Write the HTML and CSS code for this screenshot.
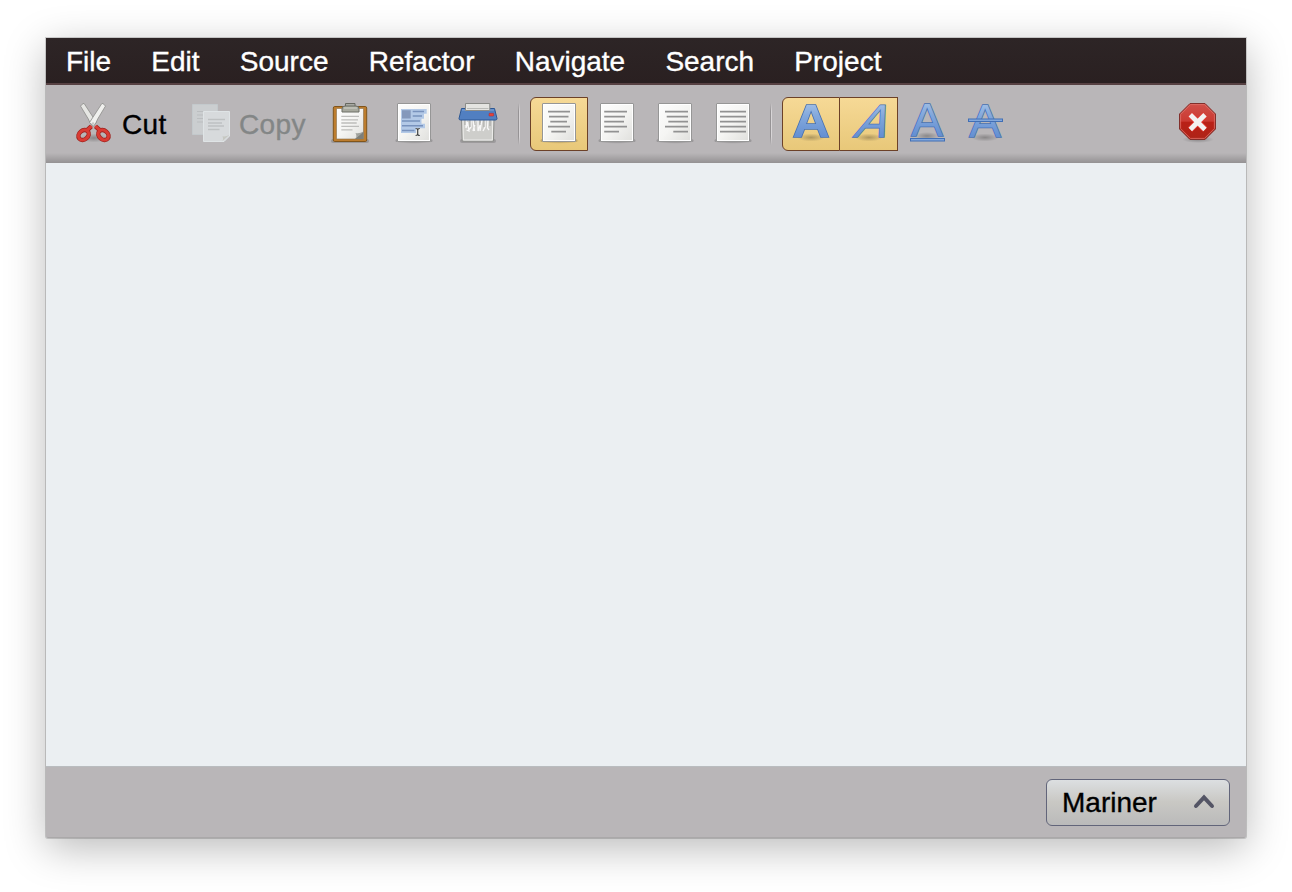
FILE: index.html
```html
<!DOCTYPE html>
<html lang="en">
<head>
<meta charset="utf-8">
<title>Mariner</title>
<link rel="stylesheet" href="styles.css">
</head>
<body>
<svg class="defs" width="0" height="0" aria-hidden="true">
  <defs>
    <linearGradient id="paper" x1="0" y1="0" x2="1" y2="1"><stop offset="0" stop-color="#fdfdfd"/><stop offset=".5" stop-color="#f5f5f3"/><stop offset="1" stop-color="#dfdfdc"/></linearGradient>
    <linearGradient id="blue" x1="0" y1="0" x2="0" y2="1"><stop offset="0" stop-color="#b4cdea"/><stop offset=".4" stop-color="#83a8dc"/><stop offset="1" stop-color="#5583cd"/></linearGradient>
    <linearGradient id="red" x1="0" y1="0" x2="0" y2="1"><stop offset="0" stop-color="#d0504a"/><stop offset=".49" stop-color="#cb3a32"/><stop offset=".52" stop-color="#b92016"/><stop offset="1" stop-color="#ae2418"/></linearGradient>
    <radialGradient id="shade"><stop offset="0" stop-color="#000" stop-opacity=".26"/><stop offset="1" stop-color="#000" stop-opacity="0"/></radialGradient>
    <g id="page">
      <ellipse cx="20" cy="38.3" rx="20" ry="2.5" fill="url(#shade)"/>
      <rect x="1.5" y="36" width="37" height="3" rx="1.5" fill="#000" opacity=".15"/>
      <rect x="3.5" y=".5" width="33" height="38" rx=".5" fill="url(#paper)" stroke="#969696"/>
      <rect x="4.5" y="1.5" width="31" height="36" fill="none" stroke="#fff"/>
    </g>
  </defs>
</svg>
<main class="window">
  <nav class="menubar">
    <span>File</span><span>Edit</span><span>Source</span><span>Refactor</span><span>Navigate</span><span>Search</span><span>Project</span>
  </nav>
  <div class="toolbar">
    <button class="tool cut">
      <svg class="icon" viewBox="0 0 40 40"><ellipse cx="20" cy="35" rx="13" ry="4.5" fill="url(#shade)"/><path d="M6.6 3.2Q7.5 1 10 .3L22.5 19.5 18.3 23.2Q15.3 19 14.3 16Z" fill="#e6e6e3" stroke="#8b8c89" stroke-width=".8"/><path d="M31.4 3.2Q30.5 1 28 .3L15.5 19.5 19.7 23.2Q22.7 19 23.7 16Z" fill="#f0f0ee" stroke="#8b8c89" stroke-width=".8"/><g fill="none"><g stroke="#9e2420" stroke-width="4.5"><ellipse cx="9.6" cy="32" rx="4.4" ry="5.6" transform="rotate(50 9.6 32)"/><ellipse cx="29.4" cy="32" rx="4.4" ry="5.6" transform="rotate(-50 29.4 32)"/><path d="M13.4 27 17.3 23.3M25.6 27 21.5 23.3"/></g><g stroke="#da3b33" stroke-width="3"><ellipse cx="9.6" cy="32" rx="4.4" ry="5.6" transform="rotate(50 9.6 32)"/><ellipse cx="29.4" cy="32" rx="4.4" ry="5.6" transform="rotate(-50 29.4 32)"/><path d="M13.2 27.2 17.6 23M25.8 27.2 21.2 23"/></g></g><circle cx="19" cy="20.5" r="1.2" fill="#c8c8c6"/></svg><span>Cut</span>
    </button>
    <button class="tool copy" disabled>
      <svg class="icon" viewBox="0 0 40 40"><path d="M1.5 1.5H26.5V31.5H1.5Z" fill="#cbced0" stroke="#c3c9cc"/><path d="M6 8.5H21M6 12H20M6 15.5H18M6 19H20" stroke="#bbbec0"/><path d="M12.5 8.5H38.5V33L33 38.5H12.5Z" fill="#d7dadc" stroke="#dfe4e6"/><path d="M17 16.5H34M17 20H31M17 23H33M17 26.5H28.5" stroke="#bec1c2" stroke-width="1.3"/><path d="M30.5 38.7Q33 37 31.5 33.3 35 34 38.5 31.7Z" fill="#c6c8c2"/></svg><span>Copy</span>
    </button>
    <button class="tool"><svg class="icon" viewBox="0 0 40 40"><rect x="1" y="36" width="38" height="4" rx="2" fill="#000" opacity=".17"/><rect x="3.3" y="3.5" width="33.4" height="35" rx="1.5" fill="#bd7d2e" stroke="#80551c"/><path d="M6.5 5.5H33.5V36H6.5Z" fill="url(#paper)" stroke="#8b714b" stroke-width=".6"/><path d="M11.3 13.3H29M11.3 16.8H28M11.3 20H26.7M11.3 23.3H29M11.3 26.8H22.5" stroke="#bdbdbb" stroke-width="1.3"/><path d="M25 36Q27.5 33.5 25.5 30 29.5 31 33.5 28.5Z" fill="#a0a29d"/><path d="M25 36 33.5 28.5V36Z" fill="#7d7f79"/><path d="M15.5 3V.5H25V3" fill="#a8aaa3" stroke="#666860"/><path d="M12 9V6Q12 3 15 3H26Q29 3 29 6V9Z" fill="#a7a99e" stroke="#6d6f67"/><path d="M14 5H27" stroke="#d1d2cb"/></svg></button>
    <button class="tool"><svg class="icon" viewBox="0 0 40 40"><use href="#page"/><path d="M7 6H32.7V10.8H30V15.7H27.5V20.7H31V25.3H22V30H7Z" fill="#b3c9e7"/><rect x="8" y="7.2" width="8.7" height="8.3" fill="#8498bb"/><path d="M18.7 8.5H30M18.7 13H28M8 18H26M8 22.8H29M8 27.5H20.5" stroke="#7892bd" stroke-width="1.4"/><path d="M21.6 25.5Q23.7 25.5 23.7 27V31Q23.7 32.5 21.6 32.5M25.8 25.5Q23.7 25.5 23.7 27M23.7 31Q23.7 32.5 25.8 32.5" fill="none" stroke="#3e4041" stroke-width="1.2"/></svg></button>
    <button class="tool"><svg class="icon" viewBox="0 0 40 40"><rect x="2" y="36" width="36" height="4" rx="2" fill="#000" opacity=".15"/><path d="M3.5 15H36L35.5 38.2H4.2Z" fill="#cececb" stroke="#8b8c89"/><path d="M5 17H34.7L34.3 37H5.4Z" fill="none" stroke="#ededeb"/><path d="M8 17V25L9.5 19 11 28 8.5 27M13 17V24L10 28M15 17 16.5 28M18 17 15 28M20 17V28L23 20M24 17 22 28M27 17V24L25 28M30 17 29.5 25 31 27" fill="none" stroke="#f8f8f8" stroke-width="1.3"/><path d="M7 17V22M12 17V24M17 17V22M22 17V22M26 17V24M32 17V23" stroke="#999b98" stroke-width=".8"/><path d="M3.5 5.5H36.5L39 15.5Q39 17 37.5 17H2.5Q1 17 1 15.5Z" fill="#517fc1" stroke="#2d5793"/><path d="M4 7H36" stroke="#7fa4d8"/><path d="M7.5.5H31.8V7.5H7.5Z" fill="#e4e4e1" stroke="#8b8c89"/><path d="M9 5.5H30.5" stroke="#bbbcb9"/><rect x="31" y="10.3" width="4.7" height="2.8" rx=".6" fill="#e44438" stroke="#a62838" stroke-width=".5"/></svg></button>
    <i class="separator"></i>
    <div class="group">
      <button class="toggle on first"><svg class="icon" viewBox="0 0 40 40"><use href="#page"/><path class="lines" d="M9 8.7H31M10 13.7H29.5M11.3 18.7H28M9 23.7H31M12.3 28.7H27"/></svg></button>
      <button class="toggle"><svg class="icon" viewBox="0 0 40 40"><use href="#page"/><path class="lines" d="M7.2 8.7H30M7.2 13.7H28M7.2 18.7H27M7.2 23.7H30M7.2 28.7H22"/></svg></button>
      <button class="toggle"><svg class="icon" viewBox="0 0 40 40"><use href="#page"/><path class="lines" d="M10 8.7H33M11.7 13.7H33M13.3 18.7H33M10 23.7H33M18.3 28.7H33"/></svg></button>
      <button class="toggle"><svg class="icon" viewBox="0 0 40 40"><use href="#page"/><path class="lines" d="M7 8.7H33M7 13.7H33M7 18.7H33M7 23.7H33M7 28.7H33"/></svg></button>
    </div>
    <i class="separator"></i>
    <div class="group">
      <button class="toggle on first"><svg class="icon" viewBox="0 0 40 40"><ellipse cx="20" cy="34.5" rx="14" ry="4" fill="url(#shade)"/><text class="letter bold" x="1.4" y="34.3" textLength="37.2" lengthAdjust="spacingAndGlyphs">A</text></svg></button>
      <button class="toggle on"><svg class="icon" viewBox="0 0 40 40"><ellipse cx="20" cy="34.5" rx="14" ry="4" fill="url(#shade)"/><text class="letter slanted" transform="translate(3.8 34) skewX(-24)" textLength="31" lengthAdjust="spacingAndGlyphs">A</text></svg></button>
      <button class="toggle"><svg class="icon" viewBox="0 0 40 40"><ellipse cx="20" cy="33" rx="12" ry="4" fill="url(#shade)"/><text class="letter" x="4.3" y="32.5" textLength="31.6" lengthAdjust="spacingAndGlyphs">A</text><rect class="bar" x="3.5" y="35.5" width="34" height="2.5"/></svg></button>
      <button class="toggle"><svg class="icon" viewBox="0 0 40 40"><ellipse cx="20" cy="34.5" rx="14" ry="4" fill="url(#shade)"/><text class="letter" x="4.3" y="34" textLength="31.6" lengthAdjust="spacingAndGlyphs">A</text><rect class="bar" x="3.5" y="16" width="34" height="2.5"/></svg></button>
    </div>
    <button class="tool close"><svg class="icon" viewBox="0 0 40 40"><ellipse cx="20" cy="36.5" rx="16" ry="3.5" fill="url(#shade)"/><path d="M12 .5H27L37.5 11V26L27 36.5H12L1.5 26V11Z" fill="url(#red)" stroke="#822f2b"/><path d="M12.5 1.6H26.5L36.4 11.5V25.5L26.5 35.4H12.5L2.6 25.5V11.5Z" fill="none" stroke="#e07068" stroke-opacity=".8"/><path d="M12.2 11.7 27.1 26.6M27.1 11.7 12.2 26.6" stroke="#e83832" stroke-width="6.3"/><path d="M12.3 11.8 27 26.5M27 11.8 12.3 26.5" stroke="#f2f2f2" stroke-width="4.8"/></svg></button>
  </div>
  <section class="content"></section>
  <footer class="statusbar">
    <button class="select"><span>Mariner</span><svg class="chevron" viewBox="0 0 22 16"><path d="M3 12 11 3.5 19 12"/></svg></button>
  </footer>
</main>
</body>
</html>
```
FILE: styles.css
```css
* { box-sizing: border-box; }

body {
  margin: 0;
  padding: 38px 46px 54px;
  background: #fff;
  font-family: "Liberation Sans", Arial, sans-serif;
  font-size: 28px;
  -webkit-text-stroke: .35px currentColor;
}

button {
  margin: 0;
  padding: 0;
  border: 0;
  background: none;
  color: #000;
  font: inherit;
}

.defs { position: absolute; }

.window {
  display: flex;
  flex-direction: column;
  width: 1200px;
  height: 800px;
  border-radius: 0 0 2px 2px;
  background: #ebeff2;
  box-shadow: 0 0 0 1px rgba(0, 0, 0, .16), 0 10px 42px rgba(0, 0, 0, .28);
}

.menubar {
  display: flex;
  align-items: center;
  gap: 40.2px;
  height: 47px;
  padding: 2px 20px 0;
  border-bottom: 2px solid #574143;
  background: linear-gradient(#2d2526, #2a2021);
  color: #fff;
}

.toolbar {
  display: flex;
  align-items: center;
  height: 78px;
  padding: 0 16px;
  background: linear-gradient(rgba(0, 0, 0, 0) 68px, rgba(0, 0, 0, .2)), #b9b6b8;
}

.tool {
  display: flex;
  flex: none;
  align-items: center;
  justify-content: center;
  width: 64px;
  height: 54px;
}

.cut, .copy {
  justify-content: flex-start;
  gap: 8px;
  padding-left: 12px;
}

.cut { width: 117px; }
.copy { width: 139px; }
.copy:disabled { color: #838686; }

.tool span {
  padding-top: 1px;
  line-height: 40px;
  letter-spacing: .4px;
}

.close { margin-left: auto; }

.icon {
  display: block;
  flex: none;
  width: 40px;
  height: 40px;
  margin-bottom: 2px;
  overflow: visible;
  -webkit-text-stroke: 0;
}

.separator {
  width: 2px;
  height: 42px;
  margin: 0 10px 0 8px;
  background:
    linear-gradient(rgba(150, 147, 149, 0), #969395 20%, #969395 80%, rgba(150, 147, 149, 0)) 0 0 / 1px 100% no-repeat,
    linear-gradient(rgba(216, 213, 215, 0), #d8d5d7 20%, #d8d5d7 80%, rgba(216, 213, 215, 0)) 1px 0 / 1px 100% no-repeat;
}

.group { display: flex; }

.toggle {
  display: flex;
  align-items: center;
  justify-content: center;
  width: 58px;
  height: 54px;
}

.toggle.on {
  border: 1px solid #6c4128;
  border-left-width: 0;
  background: linear-gradient(#f6d996, #e8c879);
}

.toggle.first {
  border-left-width: 1px;
  border-radius: 6px 0 0 6px;
}

.lines {
  fill: none;
  stroke: #929292;
  stroke-width: 1.7;
}

.letter {
  fill: url(#blue);
  stroke: #4670b2;
  stroke-width: 1.5;
  font-family: "Liberation Sans", sans-serif;
  font-size: 46px;
  font-weight: 400;
  paint-order: stroke;
}

.letter.bold { font-weight: 700; }

.bar {
  fill: #83a8dc;
  stroke: #416fb5;
}

.content {
  flex: 1;
  background: #ebeff2;
}

.statusbar {
  display: flex;
  align-items: center;
  justify-content: flex-end;
  height: 72px;
  padding: 1px 16px 0;
  border-top: 1px solid #b9bcbf;
  border-bottom: 1px solid #aaa8a9;
  border-radius: 0 0 2px 2px;
  background: #b9b6b8;
}

.select {
  display: flex;
  align-items: center;
  justify-content: space-between;
  width: 184px;
  height: 47px;
  padding: 0 14px 0 15px;
  border: 1px solid #62657a;
  border-radius: 6px;
  background: linear-gradient(#dcdfe1, #c9c8c4 48%, #bababa);
}

.chevron {
  width: 22px;
  height: 16px;
  margin-bottom: 1px;
  fill: none;
  stroke: #545565;
  stroke-width: 4;
  stroke-linecap: round;
}
```
